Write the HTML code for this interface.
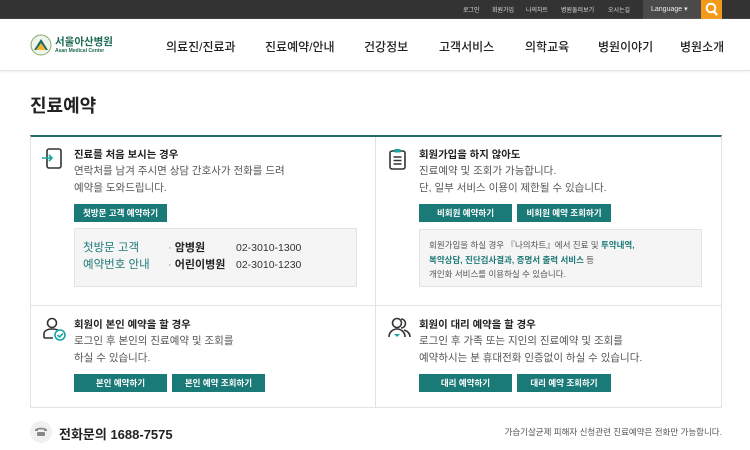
<!DOCTYPE html>
<html><head><meta charset="utf-8"><style>
*{margin:0;padding:0;box-sizing:border-box}
body{width:750px;height:450px;overflow:hidden;background:#fff;font-family:"Liberation Sans","Noto Sans CJK KR",sans-serif;color:#333;position:relative}
.a{position:absolute;white-space:nowrap}
.top{position:absolute;left:0;top:0;width:750px;height:19px;background:#333}
.top span{position:absolute;top:5px;font-size:6px;color:#ddd}
.hdr{position:absolute;left:0;top:19px;width:750px;height:52px;border-bottom:1px solid #e3e3e3;box-shadow:0 1px 2px #eee}
.nav{position:absolute;top:38px;font-size:12px;color:#222;font-weight:500}
.box{position:absolute;left:30px;top:135px;width:692px;height:273px;border:1px solid #e3e3e3;border-top:2px solid #1d6a66}
.t{font-size:10.4px;font-weight:bold;color:#222}
.d{font-size:10.5px;color:#555;line-height:17px}
.btn{position:absolute;height:18px;background:#1a7a78;color:#fff;font-size:8.5px;text-align:center;line-height:18px;font-weight:bold}
.gray{position:absolute;background:#f5f5f5;border:1px solid #e3e3e3}
.g{color:#1d7a78;font-weight:bold}
</style></head><body>
<div class="top">
<span style="left:463px">로그인</span><span style="left:492px">회원가입</span><span style="left:526px">나의차트</span><span style="left:561px">병원둘러보기</span><span style="left:608px">오시는길</span>
<div style="position:absolute;left:643px;top:0;width:58px;height:19px;background:#4a4a4a"></div>
<span style="left:651px;color:#eee;font-size:7px">Language ▾</span>
<div style="position:absolute;left:701px;top:0;width:21px;height:19px;background:#f39a1b"></div>
<svg class="a" style="left:705px;top:2px" width="14" height="15" viewBox="0 0 14 15"><circle cx="6" cy="6" r="4.3" fill="none" stroke="#fff" stroke-width="2"/><path d="M9 9.5l3 3.5" stroke="#fff" stroke-width="2.2"/></svg>
</div>
<div class="hdr">
<svg class="a" style="left:30px;top:15px" width="22" height="22" viewBox="0 0 22 22"><circle cx="11" cy="11" r="10" fill="#eef5ea" stroke="#8aa86a"/><path d="M4 16L11 5L18 16Z" fill="#1f6a5e"/><path d="M6 16L11 9L16 16Z" fill="#f2b33a"/></svg>
<div class="a" style="left:55px;top:15px;font-size:10.5px;font-weight:bold;color:#1e6b55">서울아산병원</div>
<div class="a" style="left:55px;top:29px;font-size:5px;font-weight:bold;color:#1e6b55">Asan Medical Center</div>
</div>
<div class="nav a" style="left:166px">의료진/진료과</div>
<div class="nav a" style="left:265px">진료예약/안내</div>
<div class="nav a" style="left:364px">건강정보</div>
<div class="nav a" style="left:439px">고객서비스</div>
<div class="nav a" style="left:525px">의학교육</div>
<div class="nav a" style="left:598px">병원이야기</div>
<div class="nav a" style="left:680px">병원소개</div>

<div class="a" style="left:30px;top:92px;font-size:18px;font-weight:bold;color:#222">진료예약</div>
<div class="box"></div>
<div class="a" style="left:375px;top:137px;width:1px;height:271px;background:#e3e3e3"></div>
<div class="a" style="left:31px;top:305px;width:690px;height:1px;background:#e3e3e3"></div>

<!-- cell1 -->
<svg class="a" style="left:40px;top:147px" width="24" height="24" viewBox="0 0 24 24"><rect x="7" y="2" width="14" height="19" rx="2" fill="none" stroke="#333" stroke-width="1.6"/><path d="M2 11h10M9 8l3 3-3 3" fill="none" stroke="#1aa5a5" stroke-width="1.6"/></svg>
<div class="a t" style="left:74px;top:146px">진료를 처음 보시는 경우</div>
<div class="a d" style="left:74px;top:163px">연락처를 남겨 주시면 상담 간호사가 전화를 드려<br>예약을 도와드립니다.</div>
<div class="btn" style="left:74px;top:204px;width:93px">첫방문 고객 예약하기</div>
<div class="gray" style="left:74px;top:228px;width:283px;height:59px"></div>
<div class="a" style="left:83px;top:240px;font-size:11.5px;line-height:17px;color:#1d7a78">첫방문 고객<br>예약번호 안내</div>
<div class="a" style="left:168px;top:240px;font-size:11px;line-height:17px;color:#222"><span style="color:#888">·</span> <b>암병원</b><br><span style="color:#888">·</span> <b>어린이병원</b></div>
<div class="a" style="left:236px;top:240px;font-size:10.5px;line-height:17px;color:#333">02-3010-1300<br>02-3010-1230</div>

<!-- cell2 -->
<svg class="a" style="left:386px;top:147px" width="24" height="24" viewBox="0 0 24 24"><rect x="4" y="4" width="15" height="18" rx="2" fill="none" stroke="#333" stroke-width="1.6"/><rect x="8.5" y="2" width="6" height="3.5" fill="#1aa5a5"/><path d="M7.5 10h8M7.5 13.5h8M7.5 17h8" stroke="#333" stroke-width="1.4"/></svg>
<div class="a t" style="left:419px;top:146px">회원가입을 하지 않아도</div>
<div class="a d" style="left:419px;top:163px">진료예약 및 조회가 가능합니다.<br>단, 일부 서비스 이용이 제한될 수 있습니다.</div>
<div class="btn" style="left:419px;top:204px;width:93px">비회원 예약하기</div>
<div class="btn" style="left:517px;top:204px;width:94px">비회원 예약 조회하기</div>
<div class="gray" style="left:419px;top:229px;width:283px;height:58px"></div>
<div class="a" style="left:429px;top:238px;font-size:8.5px;line-height:14.5px;color:#555">회원가입을 하실 경우 『나의차트』에서 진료 및 <span class="g">투약내역,</span><br><span class="g">복약상담, 진단검사결과, 증명서 출력 서비스</span> 등<br>개인화 서비스를 이용하실 수 있습니다.</div>

<!-- cell3 -->
<svg class="a" style="left:41px;top:316px" width="26" height="26" viewBox="0 0 26 26"><circle cx="11" cy="7" r="4.5" fill="none" stroke="#333" stroke-width="1.6"/><path d="M3 22v-4c0-3 3-5 8-5s7 1 8 3M3 22h9" fill="none" stroke="#333" stroke-width="1.6"/><circle cx="19" cy="19" r="5" fill="#fff" stroke="#1aa5a5" stroke-width="1.6"/><path d="M16.5 19l2 2 3.5-3.5" fill="none" stroke="#1aa5a5" stroke-width="1.6"/></svg>
<div class="a t" style="left:74px;top:316px">회원이 본인 예약을 할 경우</div>
<div class="a d" style="left:74px;top:333px">로그인 후 본인의 진료예약 및 조회를<br>하실 수 있습니다.</div>
<div class="btn" style="left:74px;top:374px;width:93px">본인 예약하기</div>
<div class="btn" style="left:172px;top:374px;width:93px">본인 예약 조회하기</div>

<!-- cell4 -->
<svg class="a" style="left:387px;top:316px" width="26" height="26" viewBox="0 0 26 26"><circle cx="10" cy="7" r="4.5" fill="none" stroke="#333" stroke-width="1.6"/><path d="M14 3a4.5 4.5 0 0 1 0 9M2 21c0-5 4-8 8-8s8 3 8 8M17 14c3 1 6 3 6 7" fill="none" stroke="#333" stroke-width="1.6"/><path d="M7 18h6l-3 3z" fill="#1aa5a5"/></svg>
<div class="a t" style="left:419px;top:316px">회원이 대리 예약을 할 경우</div>
<div class="a d" style="left:419px;top:333px">로그인 후 가족 또는 지인의 진료예약 및 조회를<br>예약하시는 분 휴대전화 인증없이 하실 수 있습니다.</div>
<div class="btn" style="left:419px;top:374px;width:93px">대리 예약하기</div>
<div class="btn" style="left:517px;top:374px;width:94px">대리 예약 조회하기</div>

<!-- footer -->
<div class="a" style="left:30px;top:421px;width:22px;height:22px;border-radius:50%;background:#f0f0f0"></div>
<svg class="a" style="left:34px;top:426px" width="14" height="11" viewBox="0 0 14 11"><path d="M1 4c0-3 12-3 12 0v1h-3V3.5H4V5H1z" fill="#888"/><rect x="3" y="6" width="8" height="4" rx="1" fill="#888"/></svg>
<div class="a" style="left:59px;top:424px;font-size:13px;font-weight:bold;color:#222">전화문의 1688-7575</div>
<div class="a" style="right:28px;top:426px;font-size:8.5px;color:#555">가습기살균제 피해자 신청관련 진료예약은 전화만 가능합니다.</div>
</body></html>
